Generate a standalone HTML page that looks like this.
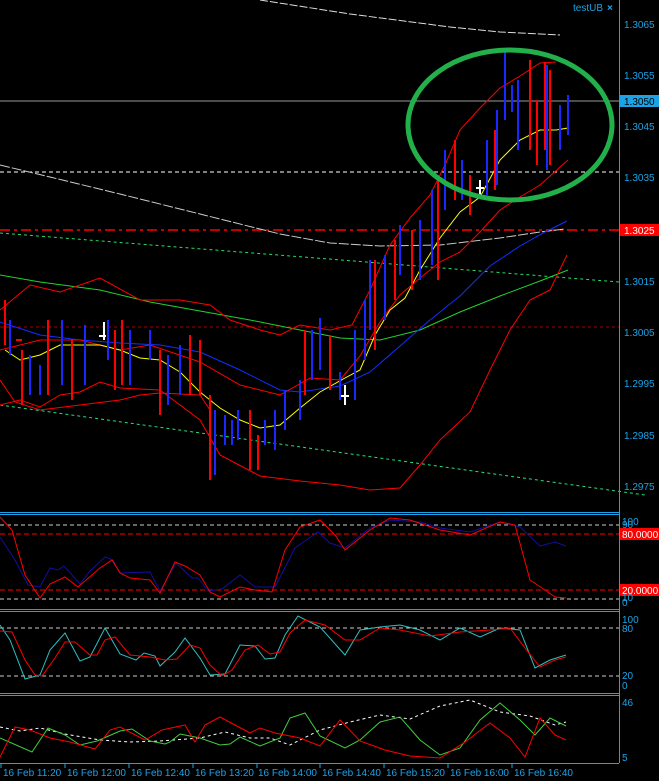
<!DOCTYPE html>
<html><head><meta charset="utf-8"><style>
html,body{margin:0;padding:0;background:#000;width:659px;height:781px;overflow:hidden}
svg{display:block}
text{font-family:"Liberation Sans",sans-serif;font-size:10px;fill:#1ba3e6}
</style></head><body>
<svg width="659" height="781" viewBox="0 0 659 781" xmlns="http://www.w3.org/2000/svg">
<rect width="659" height="781" fill="#000"/>
<g fill="none" stroke-width="1">
<!-- horizontal reference lines -->
<line x1="0" y1="101" x2="619" y2="101" stroke="#9a9a9a"/>
<line x1="0" y1="172" x2="619" y2="172" stroke="#fff" stroke-dasharray="4,3"/>
<line x1="0" y1="230" x2="619" y2="230" stroke="#f00" stroke-width="1.5" stroke-dasharray="10,4,3,4"/>
<line x1="0" y1="327" x2="619" y2="327" stroke="#a00" stroke-dasharray="3,3"/>
<line x1="0" y1="233" x2="619" y2="282" stroke="#22e060" stroke-dasharray="3,3"/>
<line x1="0" y1="405" x2="645" y2="495" stroke="#22e080" stroke-dasharray="3,3"/>
<!-- white long MAs -->
<polyline stroke="#ddd" stroke-dasharray="8,2" points="260,0 350,14 450,27 500,32 560,35"/>
<polyline stroke="#ccc" stroke-dasharray="10,2" points="0,165 50,177 120,194 200,214 280,234 330,243 380,246 440,245 500,238 540,232 565,229"/>
<!-- green MA -->
<polyline stroke="#22d030" points="0,275 40,282 100,290 150,302 200,311 250,320 300,330 340,338 380,340 420,330 460,312 500,296 540,281 568,270"/>
<!-- blue MA -->
<polyline stroke="#1030ff" points="0,322 40,335 80,340 120,343 160,345 200,352 240,370 280,390 300,392 340,386 370,372 400,346 430,320 460,296 490,266 520,246 545,232 567,221"/>
<!-- red bands -->
<polyline stroke="#f00" points="0,310 30,285 60,292 100,278 140,300 180,300 210,305 230,320 260,330 280,335 300,325 330,330 352,325 370,290 390,245 410,218 430,195 445,165 460,130 480,108 500,88 520,76 540,63 556,62"/>
<polyline stroke="#f00" points="0,350 40,340 80,340 120,350 150,345 200,362 240,385 280,395 310,378 340,380 360,356 380,322 400,295 420,278 440,262 460,252 480,232 500,210 520,197 540,185 568,160"/>
<polyline stroke="#f00" points="0,405 20,400 40,407 60,395 80,392 100,382 120,388 160,390 200,420 220,455 260,476 300,481 340,485 370,490 400,488 420,465 440,440 470,412 490,370 510,330 530,300 550,290 567,255"/>
<polyline stroke="#f00" points="0,380 15,402 40,410 80,405 120,400 140,395 160,393 200,395 210,410"/>
<!-- yellow MA -->
<polyline stroke="#ff0" points="5,350 20,360 40,355 60,345 80,345 100,345 120,350 140,358 160,360 180,372 200,392 220,408 240,420 260,428 280,425 300,408 320,392 345,378 360,370 375,335 390,310 405,298 420,270 440,238 460,212 480,197 500,160 520,140 540,130 556,130 568,128"/>
</g>
<!-- bars -->
<g stroke="#f00" stroke-width="2" fill="none">
<path d="M5 300V345M22 350V405M16 340H22M48 320V395M72 340V400M115 330V390M122 320V385M160 350V415M190 335V395M200 340V395M210 395V480M250 410V470M258 435V470M305 330V395M330 335V390M375 260V350M395 240V300M412 230V290M438 180V280M455 140V200M470 175V215M495 130V190M530 60V150M550 70V165M537 100V165M545 62V150"/>
</g>
<g stroke="#1a28ff" stroke-width="2" fill="none">
<path d="M10 320V355M30 355V395M40 365V395M62 320V385M85 325V385M108 320V360M130 330V385M150 330V360M168 355V405M180 345V395M215 410V475M225 415V445M232 420V445M238 410V440M265 420V445M275 410V450M285 390V430M300 380V420M312 330V380M320 318V370M340 372V400M355 330V400M365 300V360M370 260V330M385 255V320M400 225V275M420 220V280M432 190V265M445 150V210M462 160V200M487 140V195M497 110V185M505 50V120M512 85V112M518 80V150M547 65V170M560 105V150M568 95V135"/>
</g>
<g stroke="#fff" stroke-width="2" fill="none">
<path d="M104 322V340M99 336H106M345 385V405M341 396H349M480 180V195M476 188H484"/>
</g>
<!-- ellipse -->
<ellipse cx="510" cy="125" rx="102" ry="75" fill="none" stroke="#22b04a" stroke-width="5"/>
<!-- right axis -->
<line x1="619.5" y1="0" x2="619.5" y2="763" stroke="#1ba3e6"/>
<text x="573" y="11">testUB</text><text x="607" y="11" style="font-weight:bold">×</text>
<g>
<text x="624" y="28">1.3065</text>
<text x="624" y="79">1.3055</text>
<rect x="620" y="95" width="39" height="12" fill="#1ba3e6"/><text x="624" y="105" style="fill:#000">1.3050</text>
<text x="624" y="130">1.3045</text>
<text x="624" y="181">1.3035</text>
<rect x="620" y="224" width="39" height="12" fill="#f00"/><text x="624" y="234" style="fill:#fff">1.3025</text>
<text x="624" y="285">1.3015</text>
<text x="624" y="336">1.3005</text>
<text x="624" y="387">1.2995</text>
<text x="624" y="439">1.2985</text>
<text x="624" y="490">1.2975</text>
</g>
<!-- panel separators -->
<g stroke="#1ba3e6">
<line x1="0" y1="512.5" x2="619" y2="512.5"/><line x1="0" y1="514.5" x2="619" y2="514.5"/>
<line x1="0" y1="609.5" x2="619" y2="609.5"/><line x1="0" y1="611.5" x2="619" y2="611.5"/>
<line x1="0" y1="693.5" x2="619" y2="693.5"/><line x1="0" y1="695.5" x2="619" y2="695.5"/>
<line x1="0" y1="763.5" x2="619" y2="763.5"/>
</g>
<!-- panel1 -->
<g fill="none">
<line x1="0" y1="525" x2="619" y2="525" stroke="#ccc" stroke-dasharray="4,3"/>
<line x1="0" y1="534" x2="619" y2="534" stroke="#f00" stroke-dasharray="5,3"/>
<line x1="0" y1="590" x2="619" y2="590" stroke="#f00" stroke-dasharray="5,3"/>
<line x1="0" y1="599" x2="619" y2="599" stroke="#ccc" stroke-dasharray="4,3"/>
<polyline stroke="#1010a0" points="0,537 15,560 28,585 40,587 50,568 58,570 64,566 80,584 90,571 105,557 113,560 120,573 150,572 160,591 176,563 192,578 198,578 208,591 222,589 240,575 255,587 275,587 295,548 318,532 330,543 345,548 370,528 390,520 420,522 440,528 470,532 500,522 520,527 540,546 555,542 566,546"/>
<polyline stroke="#f00" points="0,517 12,530 25,575 40,598 50,584 65,577 78,587 100,568 112,560 120,573 130,578 150,580 160,593 175,562 185,566 200,575 210,592 220,597 240,587 255,590 272,592 285,550 300,527 320,520 335,535 345,550 370,530 390,518 410,520 440,530 470,535 500,522 515,525 530,580 545,590 555,597 566,598"/>
</g>
<text x="622" y="525">100</text><text x="622" y="528">90</text>
<rect x="620" y="528" width="39" height="12" fill="#f00"/><text x="622" y="538" style="fill:#fff">80.0000</text>
<rect x="620" y="584" width="39" height="12" fill="#f00"/><text x="622" y="594" style="fill:#fff">20.0000</text>
<text x="622" y="601">10</text><text x="622" y="606">0</text>
<!-- panel2 -->
<g fill="none">
<line x1="0" y1="628" x2="619" y2="628" stroke="#ccc" stroke-dasharray="4,3"/>
<line x1="0" y1="676" x2="619" y2="676" stroke="#ccc" stroke-dasharray="4,3"/>
<polyline stroke="#30c0c0" points="0,625 10,640 25,679 40,675 50,650 65,633 80,661 90,657 105,628 120,654 136,660 144,653 155,656 160,666 175,652 185,638 200,658 210,675 225,674 240,645 255,646 265,659 275,658 285,635 298,616 320,627 345,655 360,630 380,627 400,625 420,630 440,640 460,628 480,637 500,628 520,630 535,668 550,660 566,655"/>
<polyline stroke="#f00" points="0,631 12,632 25,660 35,675 42,676 55,658 65,642 75,642 90,655 97,655 105,640 115,637 130,655 150,657 165,660 177,659 190,645 200,648 210,665 222,676 232,670 245,650 258,645 270,654 280,652 290,633 305,620 325,625 345,640 360,640 380,628 400,630 430,636 460,632 490,630 510,628 525,648 540,667 555,660 566,657"/>
</g>
<text x="622" y="623">100</text><text x="622" y="632">80</text><text x="622" y="679">20</text><text x="622" y="689">0</text>
<!-- panel3 -->
<g fill="none">
<polyline stroke="#fff" stroke-dasharray="3,3" points="0,727 20,731 40,728 65,734 100,740 130,742 160,741 200,738 225,732 250,738 270,738 290,745 320,730 350,722 380,715 410,719 440,706 470,700 500,712 530,716 555,725 566,722"/>
<polyline stroke="#40d040" points="0,738 32,752 48,728 65,735 80,745 97,741 104,738 120,731 132,729 150,741 165,744 170,742 180,734 200,738 220,745 230,744 240,737 260,746 280,738 290,718 305,713 320,736 345,748 360,740 380,722 400,717 420,740 440,755 460,748 480,720 500,703 520,720 535,735 550,718 566,726"/>
<polyline stroke="#f00" points="0,757 15,727 30,730 50,738 70,742 95,749 110,730 120,727 145,740 162,730 185,725 195,742 205,725 220,717 235,725 250,733 260,728 275,733 300,738 320,746 340,720 360,741 385,750 410,756 440,758 465,742 490,723 510,738 525,757 540,718 555,735 566,740"/>
</g>
<text x="622" y="706">46</text><text x="622" y="761">5</text>
<!-- time axis -->
<g stroke="#1ba3e6"><path d="M1 763V768M65 763V768M129 763V768M193 763V768M257 763V768M320 763V768M384 763V768M448 763V768M512 763V768"/></g>
<text x="3" y="776">16 Feb 11:20</text>
<text x="67" y="776">16 Feb 12:00</text>
<text x="131" y="776">16 Feb 12:40</text>
<text x="195" y="776">16 Feb 13:20</text>
<text x="258" y="776">16 Feb 14:00</text>
<text x="322" y="776">16 Feb 14:40</text>
<text x="386" y="776">16 Feb 15:20</text>
<text x="450" y="776">16 Feb 16:00</text>
<text x="514" y="776">16 Feb 16:40</text>
</svg>
</body></html>
